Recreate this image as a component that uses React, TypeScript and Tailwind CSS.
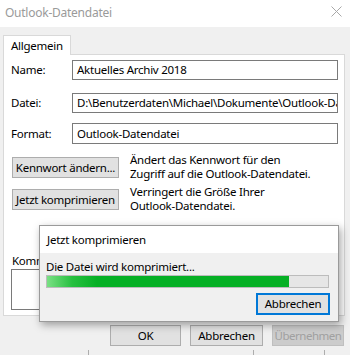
import React from "react";

export default function App() {
  return (
    <div className="relative w-[350px] h-[355px] overflow-hidden bg-[#f0f0f0] font-['Noto_Sans',sans-serif] text-[11.5px] tracking-[-0.25px] text-black">
      {/* title bar */}
      <div className="h-[27px] bg-white flex items-center justify-between pl-[5px] pr-[8px]">
        <span className="text-[#9a9a9a] text-[12px] leading-none mt-[-1px]">Outlook-Datendatei</span>
        <svg width="11" height="11" viewBox="0 0 11 11" className="mt-[-4px]">
          <path d="M0.5 0.5 L10.5 10.5 M10.5 0.5 L0.5 10.5" stroke="#a8a8a8" strokeWidth="1" fill="none" />
        </svg>
      </div>

      <div className="pt-[7px] pl-[3px]">
        {/* tab */}
        <div className="flex">
          <div className="h-[20px] px-[7px] bg-white border border-[#d9d9d9] border-b-0 flex items-center relative top-[1px] leading-none">
            Allgemein
          </div>
        </div>
        {/* panel */}
        <div className="w-[342px] h-[262px] bg-white border border-[#d9d9d9] pl-[7px] pt-[5px]">
          <div className="flex items-center h-[20px]">
            <span className="w-[61px]">Name:</span>
            <div className="w-[266px] h-[20px] border border-[#7a7a7a] flex items-center px-[4px] whitespace-nowrap overflow-hidden">
              Aktuelles Archiv 2018
            </div>
          </div>
          <div className="flex items-center h-[20px] mt-[13px]">
            <span className="w-[61px]">Datei:</span>
            <div className="w-[266px] h-[20px] border border-[#7a7a7a] flex items-center px-[4px] whitespace-nowrap overflow-hidden">
              D:\Benutzerdaten\Michael\Dokumente\Outlook-Dateien
            </div>
          </div>
          <div className="flex items-center h-[21px] mt-[10px]">
            <span className="w-[61px]">Format:</span>
            <div className="w-[266px] h-[21px] border border-[#7a7a7a] flex items-center px-[4px] whitespace-nowrap overflow-hidden">
              Outlook-Datendatei
            </div>
          </div>

          <div className="flex items-start mt-[9px]">
            <div className="mt-[4px] ml-[1px] w-[107px] h-[21px] bg-[#e1e1e1] border border-[#adadad] flex items-center justify-center whitespace-nowrap">
              Kennwort ändern...
            </div>
            <div className="ml-[11px] leading-[14px]">
              Ändert das Kennwort für den
              <br />
              Zugriff auf die Outlook-Datendatei.
            </div>
          </div>
          <div className="flex items-start mt-[4px]">
            <div className="mt-[4px] ml-[1px] w-[107px] h-[21px] bg-[#e1e1e1] border border-[#adadad] flex items-center justify-center whitespace-nowrap">
              Jetzt komprimieren
            </div>
            <div className="ml-[11px] leading-[14px]">
              Verringert die Größe Ihrer
              <br />
              Outlook-Datendatei.
            </div>
          </div>

          <div className="mt-[40px] ml-[1px] leading-[15px]">Kommentar</div>
          <div className="mt-[1px] w-[327px] h-[41px] border border-[#7a7a7a]" />
        </div>

        {/* bottom buttons */}
        <div className="flex justify-end gap-[9px] pr-[6px] mt-[9px] w-[347px]">
          <div className="w-[71px] h-[21px] bg-[#e1e1e1] border border-[#adadad] flex items-center justify-center">OK</div>
          <div className="w-[73px] h-[21px] bg-[#e1e1e1] border border-[#adadad] flex items-center justify-center">Abbrechen</div>
          <div className="w-[72px] h-[21px] bg-[#cccccc] border border-[#bfbfbf] text-[#a0a0a0] tracking-[-0.5px] flex items-center justify-center whitespace-nowrap">Übernehmen</div>
        </div>

        {/* strip of window underneath */}
        <div className="flex mt-[4px] h-[9px] overflow-hidden">
          <div className="w-[86px] h-[9px] border-r border-[#adadad] overflow-hidden pl-[4px]">
            <div className="mt-[3px] leading-[14px] whitespace-nowrap">Standardschrift</div>
          </div>
          <div className="ml-[164px] w-[72px] h-[9px] border-x border-[#adadad] overflow-hidden pl-[9px]">
            <div className="mt-[3px] leading-[14px] whitespace-nowrap">Erweitert</div>
          </div>
        </div>
      </div>

      {/* progress dialog */}
      <div className="absolute left-[39px] top-[225px] w-[300px] h-[97px] border border-[#9a9a9a] bg-[#f0f0f0] shadow-[2px_3px_8px_rgba(0,0,0,0.35)] flex flex-col">
        <div className="h-[27px] bg-white flex items-center pl-[7px]">Jetzt komprimieren</div>
        <div className="pl-[6px] pr-[8px]">
          <div className="mt-[6px] leading-[15px]">Die Datei wird komprimiert...</div>
          <div className="mt-[1px] w-[283px] h-[13px] border border-[#bcbcbc] bg-[#e6e6e6]">
            <div className="h-full w-[242px] bg-[linear-gradient(90deg,#7ae084_0px,#27c040_25px,#06b025_50px)]" />
          </div>
          <div className="flex justify-end mt-[5px]">
            <div className="w-[74px] h-[22px] border-2 border-[#0078d7] bg-[#e1e1e1] flex items-center justify-center">
              Abbrechen
            </div>
          </div>
        </div>
      </div>
    </div>
  );
}
